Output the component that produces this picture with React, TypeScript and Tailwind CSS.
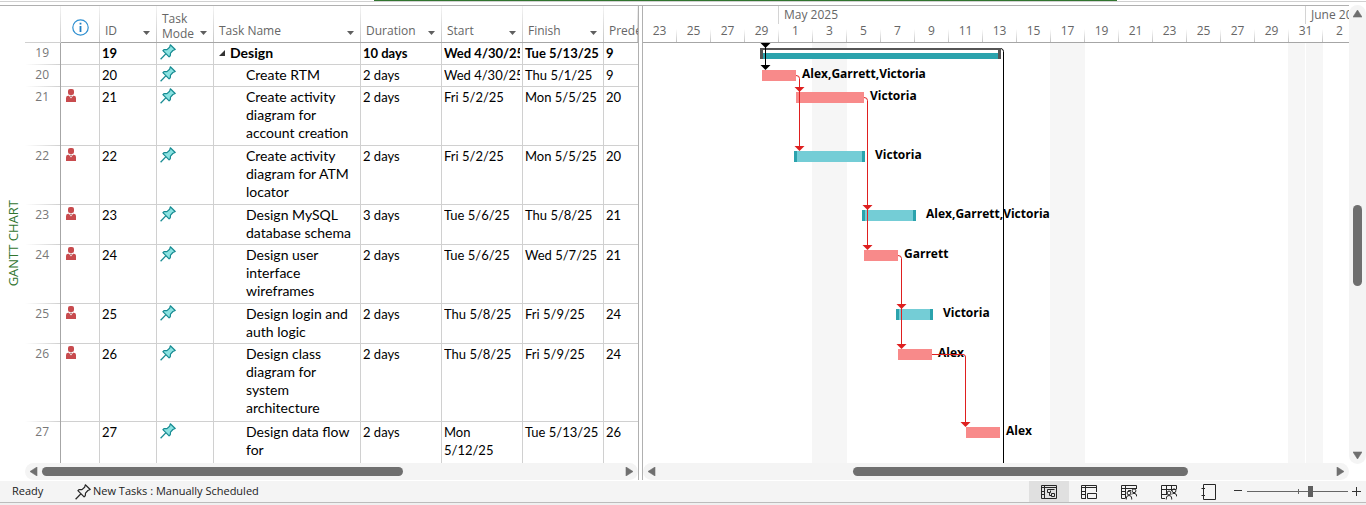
import React from "react";

type Task = {
  id: number;
  name: string;
  duration: string;
  start: string;
  finish: string;
  pred: string;
  height: string;
  person?: boolean;
  summary?: boolean;
};

const tasks: Task[] = [
  { id: 19, name: "Design", duration: "10 days", start: "Wed 4/30/25", finish: "Tue 5/13/25", pred: "9", height: "h-[22px]", summary: true },
  { id: 20, name: "Create RTM", duration: "2 days", start: "Wed 4/30/25", finish: "Thu 5/1/25", pred: "9", height: "h-[22px]" },
  { id: 21, name: "Create activity\ndiagram for\naccount creation", duration: "2 days", start: "Fri 5/2/25", finish: "Mon 5/5/25", pred: "20", height: "h-[59px]", person: true },
  { id: 22, name: "Create activity\ndiagram for ATM\nlocator", duration: "2 days", start: "Fri 5/2/25", finish: "Mon 5/5/25", pred: "20", height: "h-[59px]", person: true },
  { id: 23, name: "Design MySQL\ndatabase schema", duration: "3 days", start: "Tue 5/6/25", finish: "Thu 5/8/25", pred: "21", height: "h-[40px]", person: true },
  { id: 24, name: "Design user\ninterface\nwireframes", duration: "2 days", start: "Tue 5/6/25", finish: "Wed 5/7/25", pred: "21", height: "h-[59px]", person: true },
  { id: 25, name: "Design login and\nauth logic", duration: "2 days", start: "Thu 5/8/25", finish: "Fri 5/9/25", pred: "24", height: "h-[40px]", person: true },
  { id: 26, name: "Design class\ndiagram for\nsystem\narchitecture", duration: "2 days", start: "Thu 5/8/25", finish: "Fri 5/9/25", pred: "24", height: "h-[78px]", person: true },
  { id: 27, name: "Design data flow\nfor", duration: "2 days", start: "Mon\n5/12/25", finish: "Tue 5/13/25", pred: "26", height: "h-[59px]" },
];

type Bar = { x: number; w: number; y: number; kind: "critical" | "normal"; label: string; labelX: number };

const bars: Bar[] = [
  { x: 119, w: 34, y: 27, kind: "critical", label: "Alex,Garrett,Victoria", labelX: 159 },
  { x: 153, w: 68, y: 49, kind: "critical", label: "Victoria", labelX: 227 },
  { x: 151, w: 71, y: 108, kind: "normal", label: "Victoria", labelX: 232 },
  { x: 219, w: 54, y: 167, kind: "normal", label: "Alex,Garrett,Victoria", labelX: 283 },
  { x: 221, w: 34, y: 207, kind: "critical", label: "Garrett", labelX: 261 },
  { x: 253, w: 37, y: 266, kind: "normal", label: "Victoria", labelX: 300 },
  { x: 255, w: 34, y: 306, kind: "critical", label: "Alex", labelX: 295 },
  { x: 323, w: 34, y: 384, kind: "critical", label: "Alex", labelX: 363 },
];

const days = ["23", "25", "27", "29", "1", "3", "5", "7", "9", "11", "13", "15", "17", "19", "21", "23", "25", "27", "29", "31", "2"];

function Pin({ outline = false }: { outline?: boolean }) {
  return (
    <svg viewBox="0 0 16 16" className="block h-4 w-4 shrink-0" aria-hidden="true">
      <path
        d="M10.3 .8 15.2 5.500 12.900 6.500 10.500 9.200 10.300 11.800 9.100 12.800 2.900 6.600 4.200 5.500 7 5.600 9.600 3.300Z"
        fill={outline ? "none" : "#8be3e2"}
        stroke={outline ? "#262626" : "#178b92"}
        strokeWidth="1.2"
        strokeLinejoin="round"
      />
      <path d="M5.800 9.900 .6 15.300" stroke={outline ? "#262626" : "#178b92"} strokeWidth="1.3" fill="none" />
    </svg>
  );
}

function Person() {
  return (
    <svg viewBox="0 0 10 13" className="block h-[13px] w-[10px]" aria-label="Overallocated">
      <rect x="2" y="0" width="6" height="6" rx="2" fill="#c84b4e" />
      <path d="M0 13V9Q0 6.800 2.200 6.800H3L5 9.400 7 6.800H7.800Q10 6.800 10 9V13Z" fill="#c84b4e" />
      <path d="M4 6.800H6L5 8.400Z" fill="#8f2f33" />
    </svg>
  );
}

function Heading({ label, className = "", menu = true }: { label: string; className?: string; menu?: boolean }) {
  return (
    <th
      scope="col"
      className={
        "h-[37px] border-b border-b-[#a6a6a6] bg-[linear-gradient(#f4f4f4,#c8c8c8)] bg-[length:1px_100%] bg-right bg-no-repeat p-0 align-bottom font-normal " +
        className
      }
    >
      <div className="flex items-end justify-between overflow-hidden pr-[7px] pl-[5px]">
        <span className={"text-left leading-[15px] whitespace-pre " + (label.includes("\n") ? "pb-px" : "pb-1")}>{label}</span>
        {menu && (
          <button type="button" aria-label={"Filter " + label.replace("\n", " ")} className="pb-[7px]">
            <svg viewBox="0 0 7 4" className="block h-1 w-[7px]">
              <path d="M0 0H7L3.500 4Z" fill="#5f5f5f" />
            </svg>
          </button>
        )}
      </div>
    </th>
  );
}

const cell = "overflow-hidden border-r border-b border-[#d0d0d0] px-[2px] pt-px pb-0 align-top leading-[18px] whitespace-pre";

function TaskTable() {
  return (
    <table className="w-full table-fixed border-separate border-spacing-0 font-['Lato','Noto_Sans',sans-serif] text-[13px] text-black">
      <colgroup>
        <col className="w-9" />
        <col className="w-[39px]" />
        <col className="w-[57px]" />
        <col className="w-[57px]" />
        <col className="w-[147px]" />
        <col className="w-[81px]" />
        <col className="w-[81px]" />
        <col className="w-[81px]" />
        <col />
      </colgroup>
      <thead className="font-['Open_Sans','Noto_Sans',sans-serif] text-[12px] text-[#666]">
        <tr>
          <td className="border-b border-b-[#d0d0d0] bg-[linear-gradient(#f4f4f4,#c8c8c8)] bg-[length:1px_100%] bg-right bg-no-repeat p-0" />
          <th
            scope="col"
            aria-label="Indicators"
            className="border-b border-b-[#a6a6a6] bg-[linear-gradient(#f4f4f4,#c8c8c8)] bg-[length:1px_100%] bg-right bg-no-repeat p-0 pt-[6px]"
          >
            <svg viewBox="0 0 17 17" className="mx-auto block h-[17px] w-[17px]">
              <circle cx="8.5" cy="8.5" r="7.7" fill="#fff" stroke="#2e8fd0" strokeWidth="1.2" />
              <path d="M7.600 3.800H9.400V5.600H7.600ZM7.600 6.900H9.400V13H7.600Z" fill="#1e7fc4" />
            </svg>
          </th>
          <Heading label="ID" />
          <Heading label={"Task\nMode"} />
          <Heading label="Task Name" />
          <Heading label="Duration" />
          <Heading label="Start" />
          <Heading label="Finish" />
          <Heading label="Prede" menu={false} />
        </tr>
      </thead>
      <tbody>
        {tasks.map((t) => (
          <tr key={t.id} className={t.height + (t.summary ? " font-bold" : "")}>
            <th
              scope="row"
              className="border-r border-r-[#a6a6a6] bg-[linear-gradient(to_right,#fff,#d0d0d0)] bg-[length:100%_1px] bg-bottom bg-no-repeat p-0 pt-px pr-[11px] text-right align-top font-['Open_Sans','Noto_Sans',sans-serif] text-[12px] leading-[18px] font-normal text-[#777]"
            >
              {t.id}
            </th>
            <td className="border-r border-b border-[#d0d0d0] p-0 pt-[2px] pl-[5px] align-top">{t.person && <Person />}</td>
            <td className={cell}>{t.id}</td>
            <td className="border-r border-b border-[#d0d0d0] p-0 pt-px pl-[3px] align-top">
              <Pin />
            </td>
            <td className={cell + " text-[14px]"}>
              {t.summary ? (
                <div className="flex items-center gap-[5px] pl-[3px]">
                  <svg viewBox="0 0 6 6" className="h-[6px] w-[6px]" aria-hidden="true">
                    <path d="M6 0V6H0Z" fill="#333" />
                  </svg>
                  <span>{t.name}</span>
                </div>
              ) : (
                <div className="h-0 pl-[30px]">{t.name}</div>
              )}
            </td>
            <td className={cell}>{t.duration}</td>
            <td className={cell}>
              <div className="overflow-hidden">{t.start}</div>
            </td>
            <td className={cell}>{t.finish}</td>
            <td className="border-b border-[#d0d0d0] px-[2px] pt-px pb-0 align-top leading-[18px]">{t.pred}</td>
          </tr>
        ))}
      </tbody>
    </table>
  );
}

function Arrow({ x, y, color }: { x: number; y: number; color: string }) {
  return <path d={`M${x - 5} ${y}H${x + 5}L${x} ${y + 5}Z`} fill={color} />;
}

function Chart() {
  const red = "#df1f1f";
  return (
    <div className="relative min-h-0 flex-1 overflow-hidden">
      <svg className="absolute inset-0 h-full w-full" aria-hidden="true">
        <rect x="169" y="0" width="35" height="100%" fill="#f6f6f6" />
        <rect x="407" y="0" width="35" height="100%" fill="#f6f6f6" />
        <rect x="645" y="0" width="17" height="100%" fill="#f6f6f6" />
        <rect x="663" y="0" width="17" height="100%" fill="#f6f6f6" />
        <rect x="117" y="5" width="241" height="11" fill="#555" />
        <rect x="120" y="7" width="235" height="3" fill="#fff" />
        <rect x="120" y="10" width="235" height="6" fill="#2ba3ad" />
        {bars.map((b) =>
          b.kind === "critical" ? (
            <rect key={b.y} x={b.x} y={b.y} width={b.w} height="11" fill="#f88a8a" />
          ) : (
            <g key={b.y}>
              <rect x={b.x} y={b.y} width={b.w} height="11" fill="#2ba3ad" />
              <rect x={b.x + 3} y={b.y} width={b.w - 6} height="11" fill="#74cdd6" />
            </g>
          ),
        )}
      </svg>
      {bars.map((b) => (
        <span
          key={b.y}
          className="absolute font-['Open_Sans','Noto_Sans',sans-serif] text-[12px] leading-[18px] font-bold whitespace-nowrap text-black"
          style={{ left: b.labelX, top: b.y - 5 }}
        >
          {b.label}
        </span>
      ))}
      <svg className="absolute inset-0 h-full w-full" fill="none" aria-hidden="true">
        <path d="M122.500 0V23" stroke="#000" />
        <Arrow x={122.5} y={0} color="#000" />
        <Arrow x={122.5} y={22} color="#000" />
        <path d="M358 5.500Q360.500 6 360.500 8.500V2000" stroke="#000" />
        <path d="M153 32.500Q156.500 32.500 156.500 35.500V104" stroke={red} />
        <Arrow x={156.5} y={44} color={red} />
        <Arrow x={156.5} y={103} color={red} />
        <path d="M221 54.500Q224.500 54.500 224.500 57.500V203" stroke={red} />
        <Arrow x={224.5} y={162} color={red} />
        <Arrow x={224.5} y={202} color={red} />
        <path d="M255 212.500Q258.500 212.500 258.500 215.500V302" stroke={red} />
        <Arrow x={258.5} y={261} color={red} />
        <Arrow x={258.5} y={301} color={red} />
        <path d="M289 311.500H320Q322.500 311.500 322.500 314V380" stroke={red} />
        <Arrow x={322.5} y={379} color={red} />
      </svg>
    </div>
  );
}

function Timescale() {
  return (
    <div className="h-[37px] shrink-0 overflow-hidden border-b border-[#a6a6a6] font-['Open_Sans','Noto_Sans',sans-serif] text-[12px] text-[#666]">
      <div className="flex h-[18px] leading-[18px] whitespace-nowrap">
        <div className="w-[135px] shrink-0" />
        <div className="w-[527px] shrink-0 border-l border-[#d4d4d4] pl-[5px]">May 2025</div>
        <div className="min-w-0 flex-1 overflow-hidden border-l border-[#d4d4d4] pl-[5px]">June 2025</div>
      </div>
      <div className="flex h-[18px]">
        {days.map((d, i) => (
          <div
            key={i}
            className="w-[34px] shrink-0 bg-[linear-gradient(#fff,#c4c4c4)] bg-[length:1px_13px] bg-right-bottom bg-no-repeat pr-px text-center leading-[14px]"
          >
            {d}
          </div>
        ))}
      </div>
    </div>
  );
}

const arrowPaths = {
  left: "M8 0V9L1 4.500Z",
  right: "M1 0V9L8 4.500Z",
  up: "M0 8H9L4.500 1Z",
  down: "M0 1H9L4.500 8Z",
};

function ScrollButton({ dir }: { dir: keyof typeof arrowPaths }) {
  return (
    <button type="button" aria-label={"Scroll " + dir} className="flex h-[17px] w-[17px] shrink-0 items-center justify-center">
      <svg viewBox="0 0 9 9" className="h-[9px] w-[9px]">
        <path d={arrowPaths[dir]} fill="#6f6f6f" stroke="#6f6f6f" strokeWidth=".6" strokeLinejoin="round" />
      </svg>
    </button>
  );
}

function HScroll({ before, thumb, after }: { before: string; thumb: string; after: string }) {
  return (
    <div className="flex h-[17px] shrink-0 items-center rounded-full bg-[#f4f4f4]">
      <ScrollButton dir="left" />
      <div className={before} />
      <div className={"h-[9px] rounded-full bg-[#6f6f6f] " + thumb} />
      <div className={after} />
      <ScrollButton dir="right" />
    </div>
  );
}

const people = (
  <>
    <circle cx="8" cy="9" r="1.9" />
    <path d="M5.300 15.500V14Q5.500 11.500 8 11.500T10.700 14V15.500" />
    <circle cx="13" cy="6.8" r="1.9" />
    <path d="M10.800 10.500Q11.500 9.300 13 9.300 15.800 9.300 15.800 12.500" />
  </>
);

const views: { name: string; drawing: React.ReactNode }[] = [
  {
    name: "Gantt Chart",
    drawing: <path d="M.5 1.500H15.500V14.500H.5ZM.5 3.500H15.500M3.500 1.500V14.500M.5 7.500H3.500M.5 10.500H3.500M13.500 5.500H6.500V8.500H9.500V6.500M8.500 8.500V11.500H10.500M10.500 9.500H13.500V12.500H10.500Z" />,
  },
  {
    name: "Task Usage",
    drawing: <path d="M15.500 8V1.500H.5V14.500H5M.5 3.500H15.500M4.500 1.500V14.500M.5 7.500H4.500M.5 10.500H4.500M6.500 9.500H15.500V14.500H6.500Z" />,
  },
  {
    name: "Team Planner",
    drawing: (
      <>
        <path d="M15.500 5V1.500H.5V14.500H4M.5 4.500H15.500M4.500 1.500V14.500M.5 7.500H4.500M.5 10.500H4.500M10 6.500H7.500V8" />
        {people}
      </>
    ),
  },
  {
    name: "Resource Sheet",
    drawing: (
      <>
        <path d="M15.500 5V1.500H.5V14.500H4M.5 5.500H15.500M5.500 1.500V11M10.500 1.500V7M.5 10.500H5.500" />
        {people}
      </>
    ),
  },
  {
    name: "Report",
    drawing: <path d="M2.500 .5H14.500V15.500H2.500ZM.5 4.500H4M.5 11.500H4" />,
  },
];

function StatusBar() {
  return (
    <footer className="mt-px flex h-[22px] shrink-0 items-stretch border-b border-[#bcbcbc] bg-[#f4f4f4] font-['Open_Sans','Noto_Sans',sans-serif] text-[11px] text-[#222]">
      <span className="flex w-[75px] items-center pl-3">Ready</span>
      <button type="button" className="flex items-center gap-[2px]">
        <Pin outline />
        New Tasks : Manually Scheduled
      </button>
      <div className="ml-auto flex">
        {views.map((v, i) => (
          <button
            key={v.name}
            type="button"
            aria-label={v.name}
            className={"flex w-10 items-center justify-center " + (i === 0 ? "bg-[#e0e0e0]" : "")}
          >
            <svg viewBox="0 0 16 16" className="h-4 w-4" fill="none" stroke="#262626">
              {v.drawing}
            </svg>
          </button>
        ))}
        <div className="flex items-center pr-[5px] pl-[5px]">
          <button type="button" aria-label="Zoom out" className="flex w-[13px] justify-start">
            <svg viewBox="0 0 9 9" className="h-[9px] w-[9px]">
              <path d="M0 3.500H8" stroke="#333" />
            </svg>
          </button>
          <div className="relative flex w-[101px] items-center">
            <span className="absolute left-1/2 h-[5px] w-px bg-[#666]" />
            <input
              type="range"
              aria-label="Zoom"
              min={0}
              max={100}
              defaultValue={64}
              className="relative h-3 w-full appearance-none bg-[linear-gradient(#666,#666)] bg-[length:100%_1px] bg-center bg-no-repeat [&::-webkit-slider-thumb]:h-[11px] [&::-webkit-slider-thumb]:w-[5px] [&::-webkit-slider-thumb]:appearance-none [&::-webkit-slider-thumb]:bg-[#5f5f5f]"
            />
          </div>
          <button type="button" aria-label="Zoom in" className="flex w-[13px] justify-end">
            <svg viewBox="0 0 9 9" className="h-[9px] w-[9px]">
              <path d="M0 4.500H9M4.500 0V9" stroke="#333" />
            </svg>
          </button>
        </div>
      </div>
    </footer>
  );
}

export default function App() {
  return (
    <div className="flex h-screen flex-col overflow-hidden bg-[#f0f0f0] pb-[2px]">
      <div className="flex h-[5px] shrink-0 bg-white">
        <div className="h-[2px] flex-[374] border-b border-[#d0d0d0]" />
        <div className="h-[2px] flex-[743] border-b border-[#d0d0d0] bg-[#31752f]" />
        <div className="h-[2px] flex-[249] border-b border-[#d0d0d0]" />
      </div>
      <main className="flex min-h-0 flex-1 bg-white">
        <div className="flex w-[25px] shrink-0 items-center justify-center border-t border-[#b0b0b0]">
          <h1 className="rotate-180 font-['Open_Sans','Noto_Sans',sans-serif] text-[13px] leading-4 font-medium whitespace-nowrap text-[#31752f] [writing-mode:vertical-rl]">
            GANTT CHART
          </h1>
        </div>
        <section className="flex w-[614px] shrink-0 flex-col border-t border-r border-[#b0b0b0]">
          <div className="min-h-0 flex-1 overflow-hidden">
            <TaskTable />
          </div>
          <HScroll before="w-0" thumb="flex-[361]" after="flex-[218]" />
        </section>
        <div className="w-[3px] shrink-0 border-t border-[#b0b0b0]" />
        <section className="flex min-w-0 flex-1 border-l border-[#b0b0b0]">
          <div className="flex min-w-0 flex-1 flex-col">
            <div className="flex min-h-0 flex-1 flex-col border-t border-[#b0b0b0]">
              <Timescale />
              <Chart />
            </div>
            <HScroll before="flex-[193]" thumb="flex-[335]" after="flex-[144]" />
          </div>
          <div className="mb-4 flex w-[17px] shrink-0 flex-col items-center rounded-full bg-[#f4f4f4]">
            <ScrollButton dir="up" />
            <div className="flex-[183]" />
            <div className="w-[9px] flex-[80] rounded-full bg-[#6f6f6f]" />
            <div className="flex-[161]" />
            <ScrollButton dir="down" />
          </div>
        </section>
      </main>
      <div className="-mb-px h-px shrink-0 bg-white" />
      <StatusBar />
    </div>
  );
}
